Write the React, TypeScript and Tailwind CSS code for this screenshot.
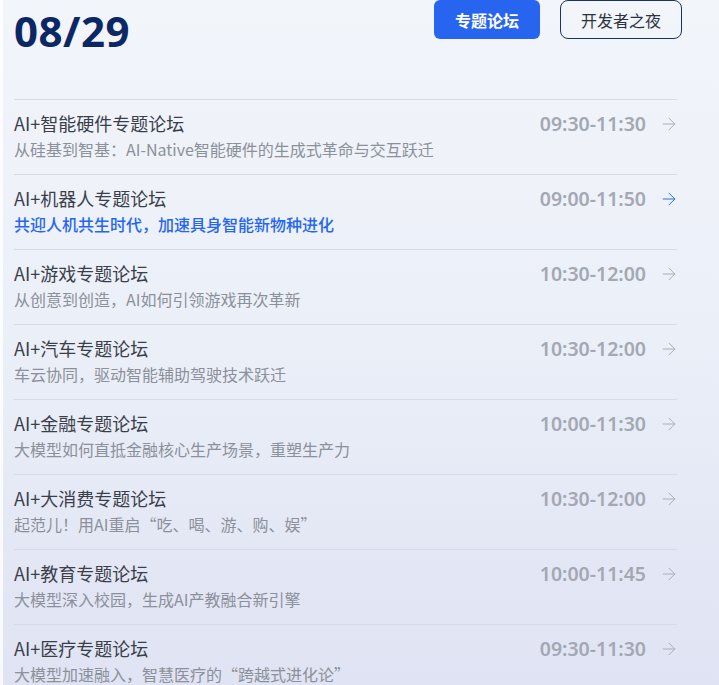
import { ArrowRight } from 'lucide-react'

const forums = [
  { title: 'AI+智能硬件专题论坛', sub: '从硅基到智基：AI-Native智能硬件的生成式革命与交互跃迁', time: '09:30-11:30' },
  { title: 'AI+机器人专题论坛', sub: '共迎人机共生时代，加速具身智能新物种进化', time: '09:00-11:50', active: true },
  { title: 'AI+游戏专题论坛', sub: '从创意到创造，AI如何引领游戏再次革新', time: '10:30-12:00' },
  { title: 'AI+汽车专题论坛', sub: '车云协同，驱动智能辅助驾驶技术跃迁', time: '10:30-12:00' },
  { title: 'AI+金融专题论坛', sub: '大模型如何直抵金融核心生产场景，重塑生产力', time: '10:00-11:30' },
  { title: 'AI+大消费专题论坛', sub: '起范儿！用AI重启“吃、喝、游、购、娱”', time: '10:30-12:00' },
  { title: 'AI+教育专题论坛', sub: '大模型深入校园，生成AI产教融合新引擎', time: '10:00-11:45' },
  { title: 'AI+医疗专题论坛', sub: '大模型加速融入，智慧医疗的“跨越式进化论”', time: '09:30-11:30' },
]

const cjk = '"Noto Sans CJK SC", "Noto Sans", sans-serif'

export default function App() {
  return (
    <div
      className="w-[719px] h-[685px] overflow-hidden border-l-[3px] border-white/80 bg-gradient-to-b from-[#f2f5fa] via-[#ebeff8] to-[#dfe3f3]"
      style={{ fontFamily: '"Noto Sans", "Noto Sans CJK SC", sans-serif' }}
    >
      <div className="pl-[11px] w-[674px]">
        {/* Header */}
        <div className="h-[99px] flex justify-between items-start">
          <h1 className="text-[42px] leading-[58px] font-bold text-[#0b2864] mt-[2px] tracking-[0.5px]">08/29</h1>
          <div className="flex gap-[20px] mr-[-5px]" style={{ fontFamily: cjk }}>
            <button className="w-[106px] h-[39px] rounded-[6px] bg-[#2765f0] text-white text-[16px] font-bold">
              专题论坛
            </button>
            <button className="w-[122px] h-[39px] rounded-[8px] border border-[#1c3168] text-[#2c3340] text-[16px]">
              开发者之夜
            </button>
          </div>
        </div>

        {/* List */}
        <div>
          {forums.map((f) => (
            <div key={f.title} className="h-[75px] border-t border-[#d6dbe5] pt-[11px] flex justify-between">
              <div style={{ fontFamily: cjk }}>
                <div className="text-[18px] leading-[24px] text-[#3a3f4a]">{f.title}</div>
                <div
                  className={`mt-[3px] text-[16px] leading-[22px] ${
                    f.active ? 'text-[#2466f0] font-medium' : 'text-[#8b909a]'
                  }`}
                >
                  {f.sub}
                </div>
              </div>
              <div className="flex items-start h-[24px] pt-[1px] mr-[-2px]">
                <span className="text-[19.5px] leading-[24px] font-semibold text-[#a3a8b3]">{f.time}</span>
                <ArrowRight
                  className={`ml-[13px] mt-[2px] ${f.active ? 'text-[#2f6cf2]' : 'text-[#a9aeb8]'}`}
                  size={20}
                  strokeWidth={1.2}
                />
              </div>
            </div>
          ))}
        </div>
      </div>
    </div>
  )
}
